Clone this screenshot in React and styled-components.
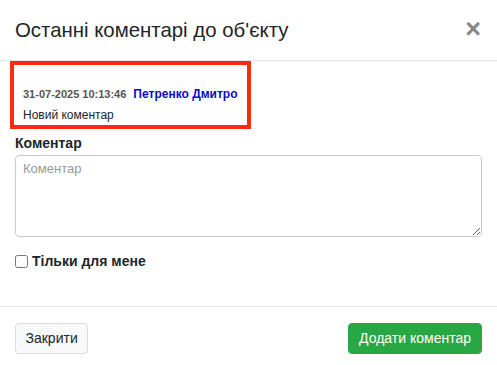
import React from 'react'
import styled, { createGlobalStyle } from 'styled-components'

const GlobalStyle = createGlobalStyle`
  html, body {
    margin: 0;
    padding: 0;
    background: #fff;
  }
  body {
    font-family: "Liberation Sans", Arial, Helvetica, sans-serif;
    color: #212529;
  }
  * {
    box-sizing: border-box;
  }
`

const Modal = styled.div`
  width: 497px;
  height: 365px;
  background: #fff;
  display: flex;
  flex-direction: column;
  overflow: hidden;
`

const Header = styled.div`
  display: flex;
  align-items: center;
  justify-content: space-between;
  padding: 15px;
  border-bottom: 1px solid #e5e5e5;
`

const Title = styled.h5`
  margin: 0;
  font-size: 20.4px;
  font-weight: 400;
  line-height: 30px;
  color: #212529;
`

const CloseX = styled.button`
  border: 0;
  background: transparent;
  padding: 0;
  margin: -3px 1px 0 0;
  font-family: "Liberation Sans", Arial, sans-serif;
  font-size: 27px;
  font-weight: 700;
  line-height: 30px;
  color: #888;
  cursor: pointer;
`

const Body = styled.div`
  padding: 0 15px;
  display: flex;
  flex-direction: column;
`

const Highlight = styled.div`
  margin: 0 -5px;
  width: 241px;
  border: 4px solid #fd2a10;
  padding: 19px 9px 0;
`

const MetaLine = styled.div`
  display: flex;
  align-items: baseline;
  gap: 7px;
  line-height: 20px;
  margin-bottom: 1px;
`

const Stamp = styled.span`
  font-size: 11px;
  font-weight: 700;
  color: #555;
`

const Author = styled.span`
  font-size: 12px;
  font-weight: 700;
  color: #0b0bc4;
`

const CommentText = styled.div`
  font-size: 12px;
  line-height: 20px;
  color: #212529;
`

const Label = styled.label`
  display: block;
  margin: 4px 0 1px;
  font-size: 14px;
  font-weight: 700;
  line-height: 21px;
  color: #212529;
`

const TextArea = styled.textarea`
  display: block;
  width: 100%;
  height: 82px;
  margin: 0;
  padding: 4px 7px;
  font-family: "Liberation Sans", Arial, sans-serif;
  font-size: 13px;
  line-height: 1.4;
  color: #495057;
  border: 1px solid #ccc;
  border-radius: 4px;
  resize: vertical;
  &::placeholder {
    color: #999;
  }
`

const CheckRow = styled.label`
  display: flex;
  align-items: center;
  gap: 4px;
  margin-top: 14px;
  margin-bottom: 34px;
  font-size: 14px;
  font-weight: 700;
  line-height: 21px;
`

const Check = styled.input`
  width: 13px;
  height: 13px;
  margin: 0;
`

const Footer = styled.div`
  display: flex;
  align-items: center;
  justify-content: space-between;
  padding: 16px 15px;
  border-top: 1px solid #e5e5e5;
`

const Button = styled.button`
  font-family: "Liberation Sans", Arial, sans-serif;
  font-size: 14px;
  line-height: 21px;
  padding: 4px ${(p) => (p.$primary ? '10px' : '9.5px')};
  border-radius: 4px;
  border: 1px solid ${(p) => (p.$primary ? '#28a745' : '#dcdcdc')};
  background: ${(p) => (p.$primary ? '#28a745' : '#f8f9fa')};
  color: ${(p) => (p.$primary ? '#fff' : '#212529')};
  cursor: pointer;
`

export default function App() {
  return (
    <>
      <GlobalStyle />
      <Modal>
        <Header>
          <Title>Останні коментарі до об'єкту</Title>
          <CloseX aria-label="Закрити">×</CloseX>
        </Header>
        <Body>
          <Highlight>
            <MetaLine>
              <Stamp>31-07-2025 10:13:46</Stamp>
              <Author>Петренко Дмитро</Author>
            </MetaLine>
            <CommentText>Новий коментар</CommentText>
          </Highlight>
          <Label htmlFor="comment">Коментар</Label>
          <TextArea id="comment" placeholder="Коментар" />
          <CheckRow>
            <Check type="checkbox" />
            Тільки для мене
          </CheckRow>
        </Body>
        <Footer>
          <Button>Закрити</Button>
          <Button $primary>Додати коментар</Button>
        </Footer>
      </Modal>
    </>
  )
}
